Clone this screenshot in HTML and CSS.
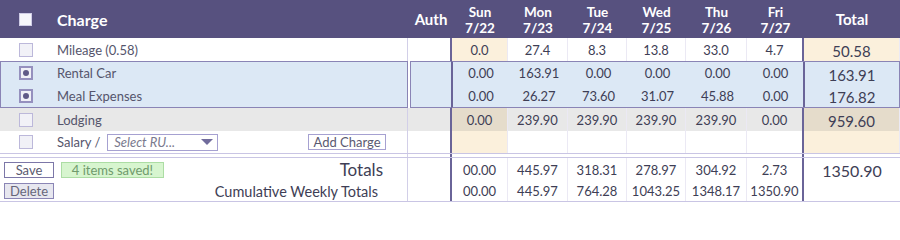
FILE: index.html
```html
<!DOCTYPE html>
<html>
<head>
<meta charset="utf-8">
<link rel="stylesheet" href="styles.css">
</head>
<body>
<div class="sheet">
  <div class="row head">
    <div class="cell chk"><span class="box hbox"></span></div>
    <div class="cell hlbl">Charge</div>
    <div class="cell auth">Auth</div>
    <div class="cell day"><span>Sun</span><span>7/22</span></div>
    <div class="cell day"><span>Mon</span><span>7/23</span></div>
    <div class="cell day"><span>Tue</span><span>7/24</span></div>
    <div class="cell day"><span>Wed</span><span>7/25</span></div>
    <div class="cell day"><span>Thu</span><span>7/26</span></div>
    <div class="cell day fri"><span>Fri</span><span>7/27</span></div>
    <div class="cell tot">Total</div>
  </div>

  <div class="row line r-white">
    <div class="cell chk"><span class="box"></span></div>
    <div class="cell lbl">Mileage (0.58)</div>
    <div class="cell auth"></div>
    <div class="cell num sun cream">0.0</div>
    <div class="cell num">27.4</div>
    <div class="cell num">8.3</div>
    <div class="cell num">13.8</div>
    <div class="cell num">33.0</div>
    <div class="cell num fri">4.7</div>
    <div class="cell num tot cream">50.58</div>
  </div>

  <div class="group">
    <div class="g-left">
      <div class="g-row">
        <div class="cell chk"><span class="box on"></span></div>
        <div class="cell lbl">Rental Car</div>
      </div>
      <div class="g-row">
        <div class="cell chk"><span class="box on"></span></div>
        <div class="cell lbl">Meal Expenses</div>
      </div>
    </div>
    <div class="g-auth"></div>
    <div class="g-days">
      <div class="cell num">0.00</div>
      <div class="cell num">163.91</div>
      <div class="cell num">0.00</div>
      <div class="cell num">0.00</div>
      <div class="cell num">0.00</div>
      <div class="cell num fri">0.00</div>
      <div class="cell num tot">163.91</div>
      <div class="cell num">0.00</div>
      <div class="cell num">26.27</div>
      <div class="cell num">73.60</div>
      <div class="cell num">31.07</div>
      <div class="cell num">45.88</div>
      <div class="cell num fri">0.00</div>
      <div class="cell num tot">176.82</div>
    </div>
  </div>

  <div class="row line r-gray">
    <div class="cell chk"><span class="box"></span></div>
    <div class="cell lbl">Lodging</div>
    <div class="cell auth"></div>
    <div class="cell num sun beige">0.00</div>
    <div class="cell num">239.90</div>
    <div class="cell num">239.90</div>
    <div class="cell num">239.90</div>
    <div class="cell num">239.90</div>
    <div class="cell num fri">0.00</div>
    <div class="cell num tot beige">959.60</div>
  </div>

  <div class="row line r-white r-add">
    <div class="cell chk"><span class="box"></span></div>
    <div class="cell lbl add">
      <span class="sal">Salary /</span>
      <span class="select"><span class="ph">Select RU...</span><svg class="caret" width="12" height="7" viewBox="0 0 12 7"><path d="M0 0 H12 L6 6 Z" fill="#716c9c"/></svg></span>
      <span class="spacer"></span>
      <span class="btn addbtn">Add Charge</span>
    </div>
    <div class="cell auth"></div>
    <div class="cell num sun cream"></div>
    <div class="cell num"></div>
    <div class="cell num"></div>
    <div class="cell num"></div>
    <div class="cell num"></div>
    <div class="cell num fri"></div>
    <div class="cell num tot cream"></div>
  </div>

  <div class="row sep">
    <div class="cell"></div>
    <div class="cell lbl"></div>
    <div class="cell auth"></div>
    <div class="cell"></div>
    <div class="cell"></div>
    <div class="cell"></div>
    <div class="cell"></div>
    <div class="cell"></div>
    <div class="cell fri"></div>
    <div class="cell"></div>
  </div>

  <div class="foot">
    <div class="f-left">
      <div class="f-row">
        <span class="btn save">Save</span>
        <span class="msg">4 items saved!</span>
        <span class="spacer"></span>
        <span class="f-label">Totals</span>
      </div>
      <div class="f-row">
        <span class="btn del">Delete</span>
        <span class="spacer"></span>
        <span class="f-label cum">Cumulative Weekly Totals</span>
      </div>
    </div>
    <div class="f-auth"></div>
    <div class="f-days">
      <div class="cell num">00.00</div>
      <div class="cell num">445.97</div>
      <div class="cell num">318.31</div>
      <div class="cell num">278.97</div>
      <div class="cell num">304.92</div>
      <div class="cell num fri">2.73</div>
      <div class="cell num">00.00</div>
      <div class="cell num">445.97</div>
      <div class="cell num">764.28</div>
      <div class="cell num">1043.25</div>
      <div class="cell num">1348.17</div>
      <div class="cell num fri">1350.90</div>
    </div>
    <div class="f-total">1350.90</div>
  </div>
</div>
</body>
</html>
```

FILE: styles.css
```css
html, body {
  margin: 0;
  padding: 0;
  background: #ffffff;
}

.sheet {
  width: 900px;
  font-family: "Lato", "Open Sans", sans-serif;
  color: #3e3e55;
  --cols: 50px 358px 44px 56px 60px 59px 59px 61px 57px 96px;
  --dark: #6a6498;
  --lite: #d2cfe8;
  --faint: #ebe9f4;
  --blue: #dce8f5;
  --cream: #fbf0dc;
  --beige: #e5dccb;
}

.row {
  display: grid;
  grid-template-columns: var(--cols);
}

.cell {
  box-sizing: border-box;
  display: flex;
  align-items: center;
  min-width: 0;
}

.head {
  height: 38px;
  background: #57517f;
  color: #ffffff;
  font-weight: 700;
  font-size: 15px;
}

.head .cell { justify-content: center; }
.head .hlbl {
  justify-content: flex-start;
  padding-left: 7px;
  font-size: 16px;
  color: #ffffff;
}
.head .auth { justify-content: center; padding-left: 2px; }
.head .day {
  flex-direction: column;
  font-size: 13.5px;
  line-height: 16px;
  padding-top: 1px;
}
.head .day span { display: block; }
.head .tot { font-size: 15px; }

.chk { justify-content: center; padding-left: 1px; }

.box {
  box-sizing: border-box;
  width: 14px;
  height: 14px;
  border: 1px solid #bcb8da;
  background: #f1f1f7;
  display: flex;
  align-items: center;
  justify-content: center;
}
.hbox {
  width: 13px;
  height: 13px;
  background: #f6f6fb;
  border-color: #cfcce6;
}
.box.on {
  border: 2px solid #9590be;
  background: #f0f0f7;
}
.box.on::after {
  content: "";
  width: 6px;
  height: 6px;
  border-radius: 50%;
  background: #5f5987;
}

.lbl {
  padding-left: 7px;
  font-size: 13px;
  color: #55556c;
}

.line { height: 23px; }
.line .lbl { border-right: 1px solid var(--lite); }
.line .auth { border-right: 2px solid var(--dark); }
.line .num { border-right: 1px solid var(--faint); }
.line .fri { border-right: 2px solid var(--dark); }

.num {
  justify-content: center;
  font-size: 13px;
  color: #3e3e55;
}
.num.tot { font-size: 15px; padding-top: 2px; }

.r-white { background: #ffffff; }
.r-gray { background: #e8e8e8; }
.cream { background: var(--cream); }
.beige { background: var(--beige); }

/* group of two highlighted rows */
.group {
  display: grid;
  grid-template-columns: 408px 43px 449px;
  height: 47px;
}
.g-left {
  box-sizing: border-box;
  border: 1px solid #8a84b5;
  background: var(--blue);
  display: grid;
  grid-template-rows: 22px 23px;
}
.g-row {
  display: grid;
  grid-template-columns: 49px 357px;
}
.g-row .lbl { padding-left: 7px; }
.g-auth {
  box-sizing: border-box;
  margin-left: 2px;
  border: 1px solid #8a84b5;
  border-right: 0;
  background: var(--blue);
}
.g-days {
  box-sizing: border-box;
  border: 1px solid #8a84b5;
  border-left: 2px solid var(--dark);
  border-right: 1px solid #8a84b5;
  background: var(--blue);
  display: grid;
  grid-template-columns: 56px 60px 59px 59px 61px 57px 1fr;
  grid-template-rows: 22px 23px;
}
.g-days .fri { border-right: 2px solid var(--dark); }
.g-days .num.tot { padding-top: 3px; }

/* add row */
.r-add { height: 22px; }
.add { padding-right: 21px; }
.sal { margin-right: 7px; }
.select {
  box-sizing: border-box;
  width: 111px;
  height: 17px;
  border: 1px solid #a6a1d1;
  background: #ffffff;
  display: flex;
  align-items: center;
  padding: 0 4px 0 6px;
}
.ph {
  flex: 1;
  font-style: italic;
  color: #7a7a8e;
  font-size: 13px;
}
.caret { display: block; margin-top: 1px; }
.spacer { flex: 1; }
.btn {
  box-sizing: border-box;
  display: flex;
  align-items: center;
  justify-content: center;
  font-size: 13px;
  color: #5a5a70;
}
.addbtn {
  width: 78px;
  height: 16px;
  border: 1px solid #a6a1d1;
  background: #ffffff;
}

/* separator */
.sep {
  height: 5px;
  border-top: 1px solid #c9c5e4;
  border-bottom: 1px solid #c9c5e4;
  box-sizing: border-box;
}
.sep .lbl { border-right: 1px solid var(--lite); padding: 0; }
.sep .auth { border-right: 2px solid var(--dark); }
.sep .fri { border-right: 2px solid var(--dark); }

/* footer */
.foot {
  display: grid;
  grid-template-columns: 408px 44px 352px 96px;
  height: 44px;
  border-bottom: 1px solid #c9c5e4;
  box-sizing: border-box;
}
.f-left {
  border-right: 1px solid var(--lite);
  display: grid;
  grid-template-rows: 23px 20px;
}
.f-row {
  display: flex;
  align-items: center;
  padding-left: 4px;
  gap: 7px;
}
.f-label {
  font-size: 17px;
  color: #3e3e55;
  padding-right: 24px;
}
.f-label.cum { font-size: 14.5px; padding-right: 29px; }
.save {
  width: 50px;
  height: 16px;
  border: 1px solid #7c77a8;
  background: #ffffff;
}
.del {
  width: 50px;
  height: 16px;
  border: 1px solid #8a85b5;
  background: #e7e7ef;
  color: #66667a;
}
.msg {
  box-sizing: border-box;
  width: 103px;
  height: 16px;
  border: 1px solid #acdda4;
  background: #d7f5cf;
  color: #6f9a6c;
  font-size: 13px;
  display: flex;
  align-items: center;
  justify-content: center;
}
.f-auth { border-right: 2px solid var(--dark); }
.f-days {
  display: grid;
  grid-template-columns: 56px 60px 59px 59px 61px 57px;
  grid-template-rows: 23px 20px;
}
.f-days .num { border-right: 1px solid var(--faint); }
.f-days .fri { border-right: 2px solid var(--dark); }
.f-total {
  font-size: 16px;
  text-align: center;
  padding-top: 3px;
  color: #3e3e55;
}
```
